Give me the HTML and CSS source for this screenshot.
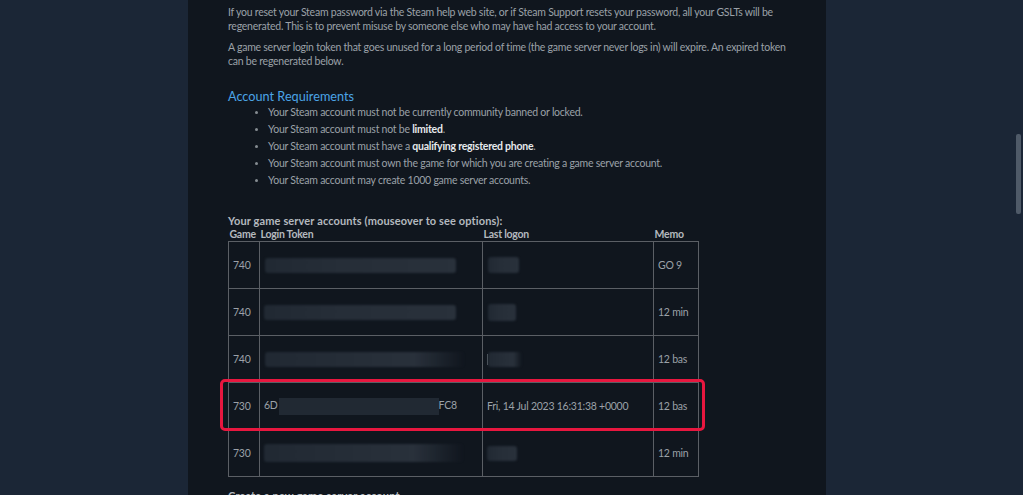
FILE: index.html
```html
<!DOCTYPE html>
<html>
<head>
<meta charset="utf-8">
<link rel="stylesheet" href="styles.css">
</head>
<body>
<div class="page">
  <p class="para">If you reset your Steam password via the Steam help web site, or if Steam Support resets your password, all your GSLTs will be regenerated. This is to prevent misuse by someone else who may have had access to your account.</p>
  <p class="para">A game server login token that goes unused for a long period of time (the game server never logs in) will expire. An expired token can be regenerated below.</p>

  <h2 class="heading">Account Requirements</h2>
  <ul class="reqs">
    <li>Your Steam account must not be currently community banned or locked.</li>
    <li>Your Steam account must not be <b>limited</b>.</li>
    <li>Your Steam account must have a <b>qualifying registered phone</b>.</li>
    <li>Your Steam account must own the game for which you are creating a game server account.</li>
    <li>Your Steam account may create 1000 game server accounts.</li>
  </ul>

  <div class="accounts">
    <div class="caption">Your game server accounts (mouseover to see options):</div>
    <table class="tbl">
      <thead>
        <tr><th class="c-game">Game</th><th class="c-token">Login Token</th><th class="c-logon">Last logon</th><th class="c-memo">Memo</th></tr>
      </thead>
      <tbody>
        <tr>
          <td>740</td>
          <td><span class="blur b-t1"></span></td>
          <td><span class="blur b-l1"></span></td>
          <td>GO 9</td>
        </tr>
        <tr>
          <td>740</td>
          <td><span class="blur b-t2"></span></td>
          <td><span class="blur b-l2"></span></td>
          <td>12 min</td>
        </tr>
        <tr>
          <td>740</td>
          <td><span class="blur fade b-t3"></span></td>
          <td><span class="tick"></span><span class="blur fade b-l3"></span></td>
          <td>12 bas</td>
        </tr>
        <tr>
          <td>730</td>
          <td class="tok">6D<span class="mask"></span>FC8</td>
          <td>Fri, 14 Jul 2023 16:31:38 +0000</td>
          <td>12 bas</td>
        </tr>
        <tr>
          <td>730</td>
          <td><span class="blur fade b-t5"></span></td>
          <td><span class="blur b-l5"></span></td>
          <td>12 min</td>
        </tr>
      </tbody>
    </table>
    <div class="highlight"></div>
  </div>

  <div class="create">Create a new game server account</div>
</div>
<div class="scroll-thumb"></div>
</body>
</html>
```

FILE: styles.css
```css
html, body {
  margin: 0;
  padding: 0;
  background: #1b2636;
  height: 100%;
  overflow: hidden;
}

body {
  font-family: Lato, "Liberation Sans", Arial, sans-serif;
  font-size: 10.5px;
  letter-spacing: -0.24px;
  color: #9ba1a8;
}

.page {
  width: 638px;
  margin-left: 188px;
  min-height: 100%;
  background: #10161e;
  box-sizing: border-box;
  padding: 6px 26px 0 40px;
}

.para {
  margin: 0;
  line-height: 13.5px;
}

.para + .para {
  margin-top: 8px;
}

.heading {
  margin: 20px 0 0 0;
  font-size: 12.7px;
  letter-spacing: 0;
  font-weight: normal;
  color: #4ba4e6;
  line-height: 16px;
}

.reqs {
  margin: 0;
  padding: 0 0 0 40px;
  list-style: disc;
}

.reqs li {
  line-height: 17.1px;
}

.reqs li::marker {
  font-size: 9px;
  color: #868c92;
}

.reqs b {
  color: #e6e9ec;
  font-weight: bold;
}

.accounts {
  position: relative;
  margin-top: 25px;
}

.caption {
  font-weight: bold;
  font-size: 11px;
  letter-spacing: 0.13px;
  color: #b4b9be;
  line-height: 14px;
}

.tbl {
  border-collapse: collapse;
  width: 471px;
  table-layout: fixed;
}

.tbl th {
  box-sizing: border-box;
  text-align: left;
  font-weight: bold;
  color: #b4b9be;
  padding: 0 0 0 1px;
  height: 13px;
  line-height: 13px;
}

.c-game { width: 31px; }
.c-token { width: 223px; }
.c-logon { width: 171px; }
.c-memo { width: 45px; }

.tbl td {
  border: 1px solid #5b5f65;
  height: 46px;
  padding: 0 0 0 4px;
  color: #9ba1a8;
  white-space: nowrap;
  overflow: hidden;
  vertical-align: middle;
}

.blur {
  display: inline-block;
  vertical-align: middle;
  height: 15px;
  border-radius: 3px;
  background: linear-gradient(90deg, #212933 0%, #262e38 40%, #29313b 100%);
  filter: blur(1px);
}

.blur.fade {
  background: linear-gradient(90deg, #212933 0%, #29313b 75%, rgba(41, 49, 59, 0) 100%);
}

.b-t1 { width: 191px; margin-left: 1px; }
.b-l1 { width: 31px; height: 16px; margin-left: 1px; }
.b-t2 { width: 192px; }
.b-l2 { width: 28px; height: 17px; margin-left: 1px; }
.b-t3 { width: 200px; margin-left: 1px; }
.b-l3 { width: 34px; }
.b-t5 { width: 200px; height: 18px; }
.b-l5 { width: 30px; height: 15px; }

.tick {
  display: inline-block;
  vertical-align: middle;
  width: 1px;
  height: 11px;
  background: #5c636b;
}

.tok .mask {
  display: inline-block;
  vertical-align: middle;
  width: 160px;
  height: 17px;
  margin-left: 1px;
  background: #212933;
}

.highlight {
  position: absolute;
  left: -8px;
  top: 165px;
  width: 485px;
  height: 52px;
  box-sizing: border-box;
  border: 3px solid #e8173f;
  border-radius: 5px;
  pointer-events: none;
}

.create {
  margin-top: 12px;
  font-weight: bold;
  font-size: 11px;
  letter-spacing: 0.13px;
  color: #b4b9be;
  line-height: 14px;
}

.scroll-thumb {
  position: absolute;
  right: 2px;
  top: 134px;
  width: 5px;
  height: 80px;
  background: #4f5a68;
  border-radius: 2px;
}
```
